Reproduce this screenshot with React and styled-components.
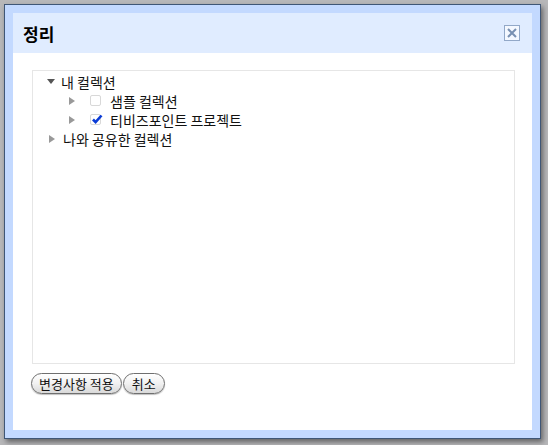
import styled, { createGlobalStyle } from "styled-components";

const Global = createGlobalStyle`
body {
  margin: 0;
  background: #b7b7b9;
  font-family: "Noto Sans CJK KR", "Liberation Sans", sans-serif;
}
`

const Page = styled.div`
width: 548px;
height: 445px;
padding: 4px 0 0 4px;
box-sizing: border-box;
overflow: hidden;
`

const Dialog = styled.div`
width: 537px;
height: 435px;
box-sizing: border-box;
border: 1px solid #3f5676;
background: #c3d9ff;
padding: 8px;
box-shadow: 2px 3px 5px rgba(0, 0, 0, 0.45);
display: flex;
`

const Inner = styled.div`
flex: 1;
background: #fff;
display: flex;
flex-direction: column;
`

const TitleBar = styled.div`
height: 40px;
background: #e0ecff;
display: flex;
align-items: center;
justify-content: space-between;
padding: 0 12px 0 10px;
`

const Title = styled.span`
font-size: 17px;
font-weight: bold;
color: #000;
`

const CloseBox = styled.div`
width: 14px;
height: 14px;
border: 1px solid #92a8c8;
background: #f4f8ff;
display: flex;
align-items: center;
justify-content: center;
`

const Body = styled.div`
flex: 1;
padding: 17px 17px 0 19px;
display: flex;
flex-direction: column;
`

const TreeBox = styled.div`
height: 294px;
box-sizing: border-box;
border: 1px solid #e6e6e6;
padding: 1px 0 0 14px;
`

const Row = styled.div`
height: 19px;
display: flex;
align-items: center;
padding-left: ${(p) => p.$indent || 0}px;
font-size: 14px;
color: #111;
`

const Arrow = styled.span`
width: 0;
height: 0;
margin-right: ${(p) => (p.$open ? 6 : 8)}px;
margin-left: ${(p) => (p.$open ? 0 : 2)}px;
border-style: solid;
border-color: transparent;
${(p) =>
  p.$open
    ? `border-width: 5px 4px 0 4px; border-top-color: #555;`
    : `border-width: 4.5px 0 4.5px 6px; border-left-color: #999;`}
`

const Check = styled.span`
width: 9px;
height: 9px;
border: 1px solid #d8d8d8;
border-radius: 2px;
margin: 0 ${(p) => p.$gap}px 0 7px;
position: relative;
`

const Tick = styled.svg`
position: absolute;
left: 0px;
top: -2px;
`

const Buttons = styled.div`
display: flex;
gap: 1px;
margin-top: 9px;
margin-left: -1px;
`

const Button = styled.button`
height: 21px;
padding: 0 ${(p) => p.$pad}px;
border: 1px solid #6f6f6f;
border-radius: 11px;
background: linear-gradient(#ffffff, #f1f1f1 50%, #d9d9d9);
font-family: "Noto Sans CJK KR", "Liberation Sans", sans-serif;
font-size: 13px;
color: #111;
line-height: 19px;
box-shadow: 0 1px 1px rgba(0, 0, 0, 0.25);
`

export default function App() {
  return (
    <Page>
      <Global />
      <Dialog>
        <Inner>
          <TitleBar>
            <Title>정리</Title>
            <CloseBox>
              <svg width="10" height="10" viewBox="0 0 10 10">
                <path d="M1 1L9 9M9 1L1 9" stroke="#7890b2" strokeWidth="2" />
              </svg>
            </CloseBox>
          </TitleBar>
          <Body>
            <TreeBox>
              <Row>
                <Arrow $open />
                내 컬렉션
              </Row>
              <Row $indent={20}>
                <Arrow />
                <Check $gap={9} />
                샘플 컬렉션
              </Row>
              <Row $indent={20}>
                <Arrow />
                <Check $gap={9}>
                  <Tick width="12" height="12" viewBox="0 0 12 12">
                    <path d="M2 6.5L4.6 9.2L10.5 2.5" stroke="#0a3bd6" strokeWidth="2.6" fill="none" />
                  </Tick>
                </Check>
                티비즈포인트 프로젝트
              </Row>
              <Row>
                <Arrow />
                나와 공유한 컬렉션
              </Row>
            </TreeBox>
            <Buttons>
              <Button $pad={7}>변경사항 적용</Button>
              <Button $pad={8}>취소</Button>
            </Buttons>
          </Body>
        </Inner>
      </Dialog>
    </Page>
  );
}
